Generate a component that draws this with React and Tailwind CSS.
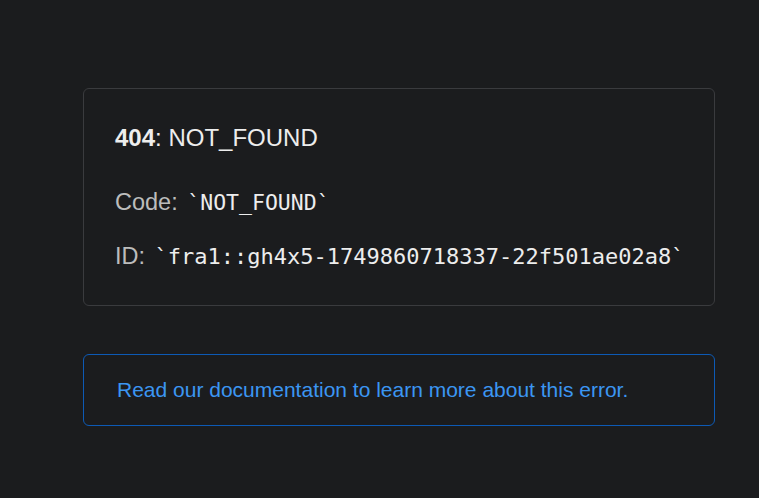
export default function App() {
  return (
    <div className="min-h-[498px] w-full bg-[#1b1c1e] font-['Liberation_Sans',Arial,sans-serif]">
      <div className="ml-[83px] w-[632px] pt-[88px]">
        <div className="rounded-[6px] border border-[#3a3b3e] px-[31px] pt-[31px] pb-[30px]">
          <h1 className="text-[24px] leading-[36px] text-[#ededed]">
            <span className="font-bold">404</span>: NOT_FOUND
          </h1>
          <p className="mt-[28px] whitespace-nowrap text-[23.5px] leading-[36px] text-[#bcbcbc]">
            Code: <code className="ml-[3px] font-['DejaVu_Sans_Mono',monospace] text-[21.5px] text-[#ededed]">`NOT_FOUND`</code>
          </p>
          <p className="mt-[17px] whitespace-nowrap text-[23.5px] leading-[36px] text-[#bcbcbc]">
            ID: <code className="ml-[3px] font-['DejaVu_Sans_Mono',monospace] text-[22px] text-[#ededed]">`fra1::gh4x5-1749860718337-22f501ae02a8`</code>
          </p>
        </div>
        <div className="mt-[48px] rounded-[6px] border border-[#0d5ab5] px-[33px] py-[17px]">
          <p className="text-[21px] leading-[36px] text-[#3b96f2]">
            Read our documentation to learn more about this error.
          </p>
        </div>
      </div>
    </div>
  );
}
